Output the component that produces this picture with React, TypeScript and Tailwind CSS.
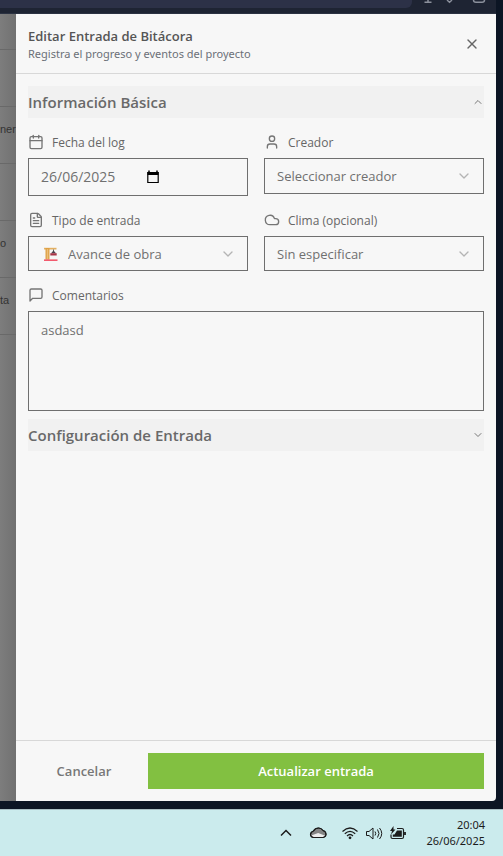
import { useState } from "react";
import type { ReactNode } from "react";
import { Calendar, ChevronDown, ChevronUp, Cloud, FileText, User, X } from "lucide-react";

const rows = ["", "ner", "", "o", "ta"];

function BrowserBar() {
  return (
    <div className="flex h-3.5 items-start justify-between overflow-hidden border-b border-[#2b3242] bg-[#1e2433]">
      <div className="h-2 flex-1 rounded-br-md bg-[#2c3147]" />
      <svg className="h-3.5 w-[84px]" viewBox="0 0 84 14" fill="none" stroke="#8b909c" strokeWidth="1.5" aria-hidden="true">
        <path d="M16 0v2M12.500 2.200h7" />
        <path d="M35.500 0v.5l2 1.800 2-1.800V0" />
        <path d="M61.500 0q0 2.300 2.500 2.300h6q2.500 0 2.500-2.300" />
      </svg>
    </div>
  );
}

function Underlay() {
  return (
    <div className="w-4 shrink-0 bg-linear-to-r from-[#7d7d7d] to-[#717171] font-['Liberation_Sans',sans-serif] text-[11px] text-[#333333]" aria-hidden="true">
      <div className="h-9 border-b border-[#696969]" />
      {rows.map((text, i) => (
        <div key={i} className="flex h-[57px] items-center border-b border-[#696969] pb-3">
          {text}
        </div>
      ))}
    </div>
  );
}

function SectionHeader({ title, open, onToggle }: { title: string; open: boolean; onToggle: () => void }) {
  const Icon = open ? ChevronUp : ChevronDown;
  return (
    <button
      type="button"
      aria-expanded={open}
      onClick={onToggle}
      className="flex h-8 w-full items-center justify-between bg-[#f1f1f1] text-[15px] font-semibold text-[#696969]"
    >
      {title}
      <Icon className="size-3 text-[#777777]" />
    </button>
  );
}

function Field({ id, label, icon, children }: { id: string; label: string; icon: ReactNode; children: ReactNode }) {
  return (
    <div className="flex min-w-0 flex-col gap-2">
      <label htmlFor={id} className="flex h-4 items-center gap-2 text-xs font-medium text-[#666666]">
        {icon}
        <span className="pt-0.5">{label}</span>
      </label>
      {children}
    </div>
  );
}

function Select({ id, options, className, icon }: { id: string; options: string[]; className: string; icon?: ReactNode }) {
  return (
    <div className="relative">
      <select id={id} className={"w-full appearance-none border border-[#6f6f6f] bg-transparent pt-0.5 pr-8 text-[13px] text-[#707070] " + className}>
        {options.map((o) => (
          <option key={o}>{o}</option>
        ))}
      </select>
      {icon}
      <ChevronDown className="pointer-events-none absolute inset-y-0 right-3 my-auto size-4 text-[#b4b4b4]" />
    </div>
  );
}

function CommentIcon() {
  return (
    <svg className="size-4 text-[#757575]" viewBox="0 0 24 24" fill="none" stroke="currentColor" strokeWidth="2" strokeLinecap="round" strokeLinejoin="round" aria-hidden="true">
      <path d="M21 15a2 2 0 0 1-2 2H7l-4 4V5a2 2 0 0 1 2-2h14a2 2 0 0 1 2 2z" />
    </svg>
  );
}

function Crane() {
  return (
    <svg className="pointer-events-none absolute inset-y-0 left-4 my-auto size-3.5" viewBox="0 0 14 14" aria-hidden="true">
      <path d="M0 .800h12.500v1.700H0z" fill="#e3b063" />
      <path d="M1.500 1h4v11.500h-4z" fill="#dfa044" />
      <path d="M2.800 3h1.400M2.800 5h1.400M2.800 7h1.400M2.800 9h1.400M2.800 11h1.400" stroke="#f5dcae" />
      <path d="M9.500 2.500v2" stroke="#666" />
      <path d="M9.500 3.500 12 6.200H7z" fill="#4b4450" />
      <path d="M6.300 6.200h6.400v2.300H6.300z" fill="#a83548" />
      <path d="M0 12.500h13.500v1.300H0z" fill="#f0324b" />
    </svg>
  );
}

function Taskbar() {
  return (
    <footer className="flex h-[47px] shrink-0 items-center justify-end border-t border-[#a9bfc4] bg-[#cbebed] pr-[18px] text-[#1c1c1c]">
      <svg className="h-6 w-[130px]" viewBox="0 0 130 24" fill="none" stroke="currentColor" aria-hidden="true">
        <path d="m3 14.500 5-5 5 5" strokeWidth="1.500" />
        <path d="M35.500 16.500q-3-.5-3-3 0-2.500 3-3.500 1.500-3 5-3 3 0 4.500 2.500 3 .800 3 3.800 0 2.700-3 3.200z" fill="#858585" />
        <path d="M35 16q-1.500-.5-1.800-1.500l7-2.500 7 2.800q-.700 1-1.700 1.200z" fill="#eeeeee" stroke="none" />
        <path d="M35.500 16.500q-3-.5-3-3 0-2.500 3-3.500 1.500-3 5-3 3 0 4.500 2.500 3 .800 3 3.800 0 2.700-3 3.200z" strokeWidth="1.200" />
        <path d="M64.500 10.500q7.500-7 15 0M66.800 12.800q5.200-5 10.400 0M69 15q3-3 6 0" strokeWidth="1.200" />
        <circle cx="72" cy="16.800" r="1.400" fill="currentColor" stroke="none" />
        <path d="M88.500 10.500h2.500l4-3.500v11l-4-3.500h-2.500zM97 10.500q1.500 2 0 4M99.500 8.500q3 4 0 8M101.500 7q4.500 5.500 0 11" />
        <path d="M119 7.500h5q1.500 0 1.500 1.500v7q0 1.500-1.500 1.500H114.500q-1.500 0-1.500-1.500v-2.500" strokeWidth="1.200" />
        <path d="M119 9.500h4.800v6.300h-9v-2.300h1.700z" fill="currentColor" stroke="none" />
        <path d="M127 11v3" strokeWidth="1.800" />
        <path d="m115.500 5-3.500 5h2l-1 3.500 4.500-5h-2z" fill="currentColor" stroke="none" />
      </svg>
      <div className="w-[77px] text-right font-['Noto_Sans',sans-serif] text-[11px] leading-4">
        <div>20:04</div>
        <div>26/06/2025</div>
      </div>
    </footer>
  );
}

export default function App() {
  const [basic, setBasic] = useState(true);
  const [config, setConfig] = useState(false);
  const [date, setDate] = useState("26/06/2025");

  return (
    <div className="flex h-screen flex-col bg-[#0c1524] font-['Open_Sans',sans-serif]">
      <div className="mr-[7px] mb-2 flex min-h-0 flex-1 flex-col">
        <BrowserBar />
        <div className="flex min-h-0 flex-1">
          <Underlay />
          <form className="flex min-w-0 flex-1 flex-col rounded-br bg-[#f7f7f7]" onSubmit={(e) => e.preventDefault()}>
            <header className="flex items-center justify-between border-b border-[#d8d8d8] px-3 pt-3 pb-[11px]">
              <div>
                <h1 className="text-[13px] leading-5 font-semibold text-[#555555]">Editar Entrada de Bitácora</h1>
                <p className="font-['Noto_Sans',sans-serif] text-[11px] leading-4 text-[#6b7078]">Registra el progreso y eventos del proyecto</p>
              </div>
              <button type="button" aria-label="Cerrar" className="p-1 text-[#666666]">
                <X className="size-4" />
              </button>
            </header>

            <main className="flex min-h-0 flex-1 flex-col gap-2 overflow-hidden p-3">
              <SectionHeader title="Información Básica" open={basic} onToggle={() => setBasic(!basic)} />
              {basic && (
                <div className="grid grid-cols-2 gap-4 pt-2">
                  <Field id="fecha" label="Fecha del log" icon={<Calendar className="size-4 text-[#757575]" />}>
                    <div className="flex h-[38px] items-center border border-[#6f6f6f] px-3">
                      <input
                        id="fecha"
                        value={date}
                        onChange={(e) => setDate(e.target.value)}
                        className="w-[104px] bg-transparent text-sm text-[#707070] outline-none"
                      />
                      <button type="button" aria-label="Abrir calendario">
                        <svg className="size-4" viewBox="0 0 16 16" aria-hidden="true">
                          <path d="M4 1.500v2M12 1.500v2" stroke="#000" strokeWidth="1.500" />
                          <path d="M2.800 3.500h10.400v10H2.800z" fill="none" stroke="#000" strokeWidth="1.200" />
                          <path d="M2.500 3h11v3h-11z" />
                        </svg>
                      </button>
                    </div>
                  </Field>
                  <Field id="creador" label="Creador" icon={<User className="size-4 text-[#757575]" />}>
                    <Select id="creador" options={["Seleccionar creador"]} className="h-9 pl-3" />
                  </Field>
                  <Field id="tipo" label="Tipo de entrada" icon={<FileText className="size-4 text-[#757575]" />}>
                    <Select id="tipo" options={["Avance de obra"]} className="h-[35px] pl-[39px]" icon={<Crane />} />
                  </Field>
                  <Field id="clima" label="Clima (opcional)" icon={<Cloud className="size-4 text-[#757575]" />}>
                    <Select id="clima" options={["Sin especificar"]} className="h-[35px] pl-3" />
                  </Field>
                  <div className="col-span-2">
                    <Field id="comentarios" label="Comentarios" icon={<CommentIcon />}>
                      <textarea
                        id="comentarios"
                        defaultValue="asdasd"
                        className="h-[100px] resize-none border border-[#6f6f6f] bg-transparent px-3 py-2 text-[13px] leading-5 text-[#707070] outline-none"
                      />
                    </Field>
                  </div>
                </div>
              )}
              <SectionHeader title="Configuración de Entrada" open={config} onToggle={() => setConfig(!config)} />
            </main>

            <div className="flex gap-2 border-t border-[#d8d8d8] p-3 text-[13px] font-semibold">
              <button type="button" className="h-9 flex-1 pt-0.5 text-[#777777]">
                Cancelar
              </button>
              <button type="submit" className="h-9 flex-[3] bg-[#82c041] pt-0.5 text-white">
                Actualizar entrada
              </button>
            </div>
          </form>
        </div>
      </div>
      <Taskbar />
    </div>
  );
}
